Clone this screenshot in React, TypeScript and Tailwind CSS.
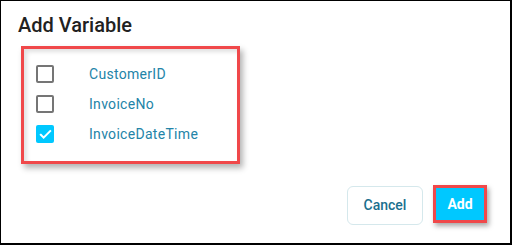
import React from "react";

const rows = [
  { label: "CustomerID", checked: false },
  { label: "InvoiceNo", checked: false },
  { label: "InvoiceDateTime", checked: true },
];

export default function App() {
  return (
    <div className="w-[512px] h-[245px] bg-white border-l border-t border-r-2 border-b-2 border-black font-['Roboto',sans-serif]">
      <div className="pl-[17px] pt-[12px]">
        <div className="h-[24px] leading-[24px] text-[20px] font-medium text-[#212121]">Add Variable</div>
        <div className="mt-[9px] ml-[3px] w-[219px] h-[118px] border-[3px] border-[#f0484a] shadow-[inset_3px_3px_4px_rgba(0,0,0,0.12),3px_4px_6px_rgba(0,0,0,0.3)] pt-[10px] pl-[12px]">
          {rows.map((r) => (
            <div key={r.label} className="h-[30px] flex items-center">
              {r.checked ? (
                <div className="w-[18px] h-[18px] rounded-[2px] bg-[#00c8ff] flex items-center justify-center">
                  <svg width="15" height="15" viewBox="0 0 24 24" fill="none" stroke="white" strokeWidth="3.2" strokeLinecap="square" strokeLinejoin="miter">
                    <path d="M4.5 12.5l4.5 4.5L19.5 6.5" />
                  </svg>
                </div>
              ) : (
                <div className="w-[18px] h-[18px] rounded-[2px] border-2 border-[#757575]" />
              )}
              <span className="ml-[35px] text-[14px] tracking-[0.3px] text-[#2384a8]">{r.label}</span>
            </div>
          ))}
        </div>
      </div>
      <div className="mt-[21px] flex justify-end items-start pr-[23px] gap-[10px]">
        <button className="mt-[1px] w-[76px] h-[39px] rounded-[6px] border border-[#d5e8ec] text-[14px] font-medium text-[#1a6f8e]">
          Cancel
        </button>
        <button className="w-[54px] h-[38px] border-[3px] border-[#f0484a] bg-[#00c8ff] text-white text-[14px] font-bold shadow-[2px_3px_5px_rgba(0,0,0,0.35)]">
          Add
        </button>
      </div>
    </div>
  );
}
